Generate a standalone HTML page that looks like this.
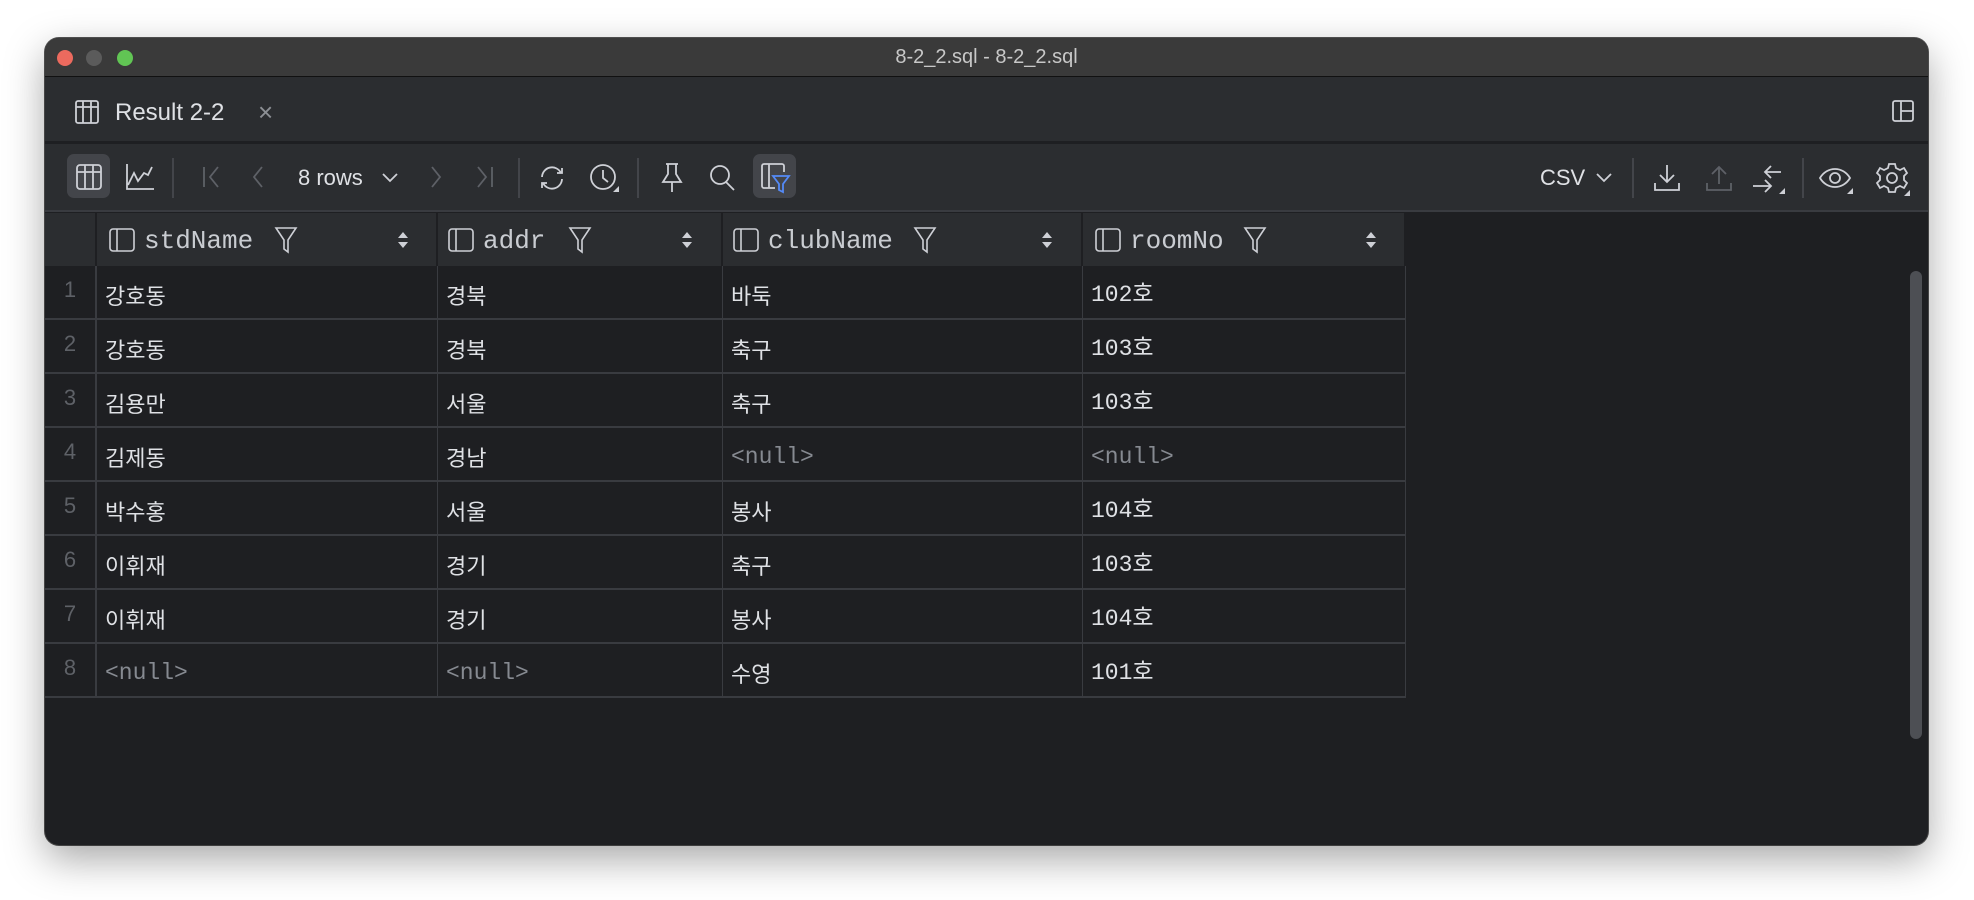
<!DOCTYPE html>
<html><head><meta charset="utf-8"><style>
*{box-sizing:border-box;margin:0;padding:0}
body{width:1974px;height:900px;background:#fff;position:relative;overflow:hidden;font-family:"Liberation Sans","Noto Sans CJK KR",sans-serif}
.win{position:absolute;left:45px;top:38px;width:1883px;height:807px;border-radius:14px;background:#1e1f22;overflow:hidden;box-shadow:0 14px 40px rgba(0,0,0,.35),0 0 0 1px #555}
.title{position:absolute;left:0;top:0;width:100%;height:39px;background:#3a3a3a;border-bottom:1px solid #111;color:#c8c8c8;font-size:20px;text-align:center;line-height:39px}
.dot{position:absolute;top:12px;width:16px;height:16px;border-radius:50%}
.tabbar{position:absolute;left:0;top:39px;width:100%;height:67px;background:#2b2d30;border-bottom:3px solid #1e1f22}
.toolbar{position:absolute;left:0;top:106px;width:100%;height:68px;background:#2b2d30;border-bottom:2px solid #393b40}
.tb{position:absolute;left:0;top:4px;width:100%;height:60px}
.abs{position:absolute}
svg{position:absolute;overflow:visible}
.sep{position:absolute;top:10px;width:2px;height:40px;background:#43454a}
.grid{position:absolute;left:0;top:175px}
.hdr{position:absolute;top:0;height:53px;background:#2b2d30;border-right:2px solid #1e1f22;font-family:"Liberation Mono",monospace;font-size:26px;color:#c9ccd1}
.cell{position:absolute;height:54px;border-right:1px solid #393b40;border-bottom:2px solid #393b40;font-size:23px;color:#dfe1e5;line-height:58px;padding-left:8px;font-family:"Liberation Mono","Noto Sans CJK KR",monospace}
.num{position:absolute;left:0;width:52px;height:54px;border-right:2px solid #393b40;border-bottom:2px solid #393b40;color:#5e6167;font-size:22px;text-align:center;line-height:48px}
.null{color:#868a91}
.kr{font-family:"Noto Sans CJK KR",sans-serif;font-size:22px}
</style></head><body>
<div class="win">
 <div class="title">8-2_2.sql - 8-2_2.sql
  <div class="dot" style="left:12px;background:#ec6a5e"></div>
  <div class="dot" style="left:41px;background:#5b5b5b"></div>
  <div class="dot" style="left:72px;background:#61c554"></div>
 </div>
 <div class="tabbar">
  <svg style="left:30px;top:23px" width="24" height="24" viewBox="0 0 24 24" fill="none" stroke="#ced0d6" stroke-width="1.8"><rect x="1" y="1" width="22" height="22" rx="2"/><path d="M1 7H23M8 1V23M16 1V23"/></svg>
  <div class="abs" style="left:70px;top:22px;font-size:24px;color:#dfe1e5">Result 2-2</div>
  <div class="abs" style="left:213px;top:20px;font-size:26px;color:#8c8f94">×</div>
  <svg style="left:1847px;top:23px" width="22" height="22" viewBox="0 0 22 22" fill="none" stroke="#ced0d6" stroke-width="1.8"><rect x="1" y="1" width="20" height="20" rx="2"/><path d="M9 1V21M9 11H21"/></svg>
 </div>
 <div class="toolbar"><div class="tb">
  <div class="abs" style="left:22px;top:6px;width:43px;height:44px;border-radius:7px;background:#43454a"></div>
  <svg style="left:31px;top:16px" width="26" height="26" viewBox="0 0 26 26" fill="none" stroke="#ced0d6" stroke-width="1.8"><rect x="1" y="1" width="24" height="24" rx="3"/><path d="M1 8H25M9 1V25M17 1V25"/></svg>
  <svg style="left:81px;top:15px" width="28" height="28" viewBox="0 0 28 28" fill="none" stroke="#ced0d6" stroke-width="1.8"><path d="M1 1V26H28M2 22L8 10L12 18L18 10L22 12L26 4"/></svg>
  <div class="sep" style="left:127px"></div>
  <svg style="left:157px;top:18px" width="20" height="22" fill="none" stroke="#5e6167" stroke-width="1.8"><path d="M2 1V21M16 1L8 11L16 21"/></svg>
  <svg style="left:207px;top:18px" width="14" height="22" fill="none" stroke="#5e6167" stroke-width="1.8"><path d="M10 1L2 11L10 21"/></svg>
  <div class="abs" style="left:253px;top:17px;font-size:22px;color:#dfe1e5">8 rows</div>
  <svg style="left:337px;top:25px" width="16" height="10" fill="none" stroke="#ced0d6" stroke-width="1.8"><path d="M1 1L8 8L15 1"/></svg>
  <svg style="left:385px;top:18px" width="14" height="22" fill="none" stroke="#5e6167" stroke-width="1.8"><path d="M2 1L10 11L2 21"/></svg>
  <svg style="left:431px;top:18px" width="20" height="22" fill="none" stroke="#5e6167" stroke-width="1.8"><path d="M2 1L10 11L2 21M16 1V21"/></svg>
  <div class="sep" style="left:473px"></div>
  <svg style="left:492px;top:16px" width="30" height="28" viewBox="0 0 30 28" fill="none" stroke="#ced0d6" stroke-width="1.8"><path d="M5 13A10 10 0 0 1 24 9M25 15A10 10 0 0 1 6 19M20 9H25V4M10 19H5V24"/></svg>
  <svg style="left:544px;top:14px" width="32" height="32" viewBox="0 0 32 32" fill="none" stroke="#ced0d6" stroke-width="1.8"><circle cx="14" cy="15" r="12"/><path d="M14 8V16L19 20"/><path d="M24 30L30 30L30 24Z" fill="#ced0d6" stroke="none"/></svg>
  <div class="sep" style="left:592px"></div>
  <svg style="left:616px;top:15px" width="22" height="30" viewBox="0 0 22 30" fill="none" stroke="#ced0d6" stroke-width="1.8"><path d="M5 1H17M7 1V11L2 19H20L15 11V1M11 19V29"/></svg>
  <svg style="left:664px;top:16px" width="28" height="28" fill="none" stroke="#ced0d6" stroke-width="1.8"><circle cx="11" cy="11" r="9"/><path d="M17 18L25 26"/></svg>
  <div class="abs" style="left:708px;top:6px;width:43px;height:44px;border-radius:7px;background:#43454a"></div>
  <svg style="left:716px;top:15px" width="30" height="30" viewBox="0 0 30 30" fill="none" stroke-width="1.8"><path d="M14 25H3A2 2 0 0 1 1 23V3A2 2 0 0 1 3 1H21A2 2 0 0 1 23 3V9M8 1V25" stroke="#ced0d6"/><path d="M12 13H28L22 21V29L18 27V21Z" stroke="#548af7"/></svg>
  <div class="abs" style="left:1495px;top:17px;font-size:22px;color:#dfe1e5">CSV</div>
  <svg style="left:1551px;top:25px" width="16" height="10" fill="none" stroke="#ced0d6" stroke-width="1.8"><path d="M1 1L8 8L15 1"/></svg>
  <div class="sep" style="left:1587px"></div>
  <svg style="left:1609px;top:16px" width="26" height="28" fill="none" stroke="#ced0d6" stroke-width="1.8"><path d="M13 1V18M6 11L13 18L20 11M1 19V26H25V19"/></svg>
  <svg style="left:1661px;top:16px" width="26" height="28" fill="none" stroke="#5e6167" stroke-width="1.8"><path d="M13 3V20M6 10L13 3L20 10M1 19V26H25V19"/></svg>
  <svg style="left:1708px;top:14px" width="34" height="32" fill="none" stroke="#ced0d6" stroke-width="1.8"><path d="M12 10H28M18 4L12 10L18 16M0 24H18M12 18L18 24L12 30"/><path d="M26 32L32 32L32 26Z" fill="#ced0d6" stroke="none"/></svg>
  <div class="sep" style="left:1757px"></div>
  <svg style="left:1774px;top:18px" width="36" height="28" fill="none" stroke="#ced0d6" stroke-width="1.8"><path d="M1 12C8 0 24 0 31 12C24 24 8 24 1 12Z"/><circle cx="16" cy="12" r="5"/><path d="M28 28L34 28L34 22Z" fill="#ced0d6" stroke="none"/></svg>
  <svg style="left:1831px;top:14px" width="34" height="34" viewBox="0 0 34 34" fill="none" stroke="#ced0d6" stroke-width="1.8"><path d="M13 2H19L20 6L24 8L28 6L31 11L28 14V18L31 21L28 26L24 24L20 26L19 30H13L12 26L8 24L4 26L1 21L4 18V14L1 11L4 6L8 8L12 6Z"/><circle cx="16" cy="16" r="5"/><path d="M28 34L34 34L34 28Z" fill="#ced0d6" stroke="none"/></svg>
 </div></div>
 <div class="grid">
  <div class="hdr" style="left:0;width:52px;border-right:2px solid #1e1f22"></div>
  <div class="hdr" style="left:52px;width:341px"><svg style="left:12px;top:15px" width="24" height="24" fill="none" stroke="#ced0d6" stroke-width="1.6"><rect x="1" y="1" width="24" height="22" rx="3"/><path d="M8 1V23"/></svg><span class="abs" style="left:47px;top:13px">stdName</span><svg style="left:178px;top:14px" width="22" height="26" fill="none" stroke="#ced0d6" stroke-width="1.6"><path d="M1 1H21L13 13V25L9 22V13Z"/></svg><svg style="left:301px;top:19px" width="10" height="16" fill="#ced0d6"><path d="M0 6L5 0L10 6ZM0 10L5 16L10 10Z"/></svg></div>
  <div class="hdr" style="left:393px;width:285px"><svg style="left:10px;top:15px" width="24" height="24" fill="none" stroke="#ced0d6" stroke-width="1.6"><rect x="1" y="1" width="24" height="22" rx="3"/><path d="M8 1V23"/></svg><span class="abs" style="left:45px;top:13px">addr</span><svg style="left:131px;top:14px" width="22" height="26" fill="none" stroke="#ced0d6" stroke-width="1.6"><path d="M1 1H21L13 13V25L9 22V13Z"/></svg><svg style="left:244px;top:19px" width="10" height="16" fill="#ced0d6"><path d="M0 6L5 0L10 6ZM0 10L5 16L10 10Z"/></svg></div>
  <div class="hdr" style="left:678px;width:360px"><svg style="left:10px;top:15px" width="24" height="24" fill="none" stroke="#ced0d6" stroke-width="1.6"><rect x="1" y="1" width="24" height="22" rx="3"/><path d="M8 1V23"/></svg><span class="abs" style="left:45px;top:13px">clubName</span><svg style="left:191px;top:14px" width="22" height="26" fill="none" stroke="#ced0d6" stroke-width="1.6"><path d="M1 1H21L13 13V25L9 22V13Z"/></svg><svg style="left:319px;top:19px" width="10" height="16" fill="#ced0d6"><path d="M0 6L5 0L10 6ZM0 10L5 16L10 10Z"/></svg></div>
  <div class="hdr" style="left:1038px;width:323px"><svg style="left:12px;top:15px" width="24" height="24" fill="none" stroke="#ced0d6" stroke-width="1.6"><rect x="1" y="1" width="24" height="22" rx="3"/><path d="M8 1V23"/></svg><span class="abs" style="left:47px;top:13px">roomNo</span><svg style="left:161px;top:14px" width="22" height="26" fill="none" stroke="#ced0d6" stroke-width="1.6"><path d="M1 1H21L13 13V25L9 22V13Z"/></svg><svg style="left:283px;top:19px" width="10" height="16" fill="#ced0d6"><path d="M0 6L5 0L10 6ZM0 10L5 16L10 10Z"/></svg></div>
 </div>
 <div id="rows" class="grid" style="top:228px"></div>
 <div class="abs" style="left:1865px;top:233px;width:12px;height:468px;border-radius:6px;background:#4d4f54"></div>
</div>
<script>
var d=[["강호동","경북","바둑","102호"],["강호동","경북","축구","103호"],["김용만","서울","축구","103호"],["김제동","경남",null,null],["박수홍","서울","봉사","104호"],["이휘재","경기","축구","103호"],["이휘재","경기","봉사","104호"],[null,null,"수영","101호"]];
var L=[52,393,678,1038],W=[341,285,360,323],h="";
d.forEach(function(r,i){var t=i*54;h+='<div class="num" style="top:'+t+'px">'+(i+1)+'</div>';
r.forEach(function(v,j){h+='<div class="cell'+(j<3&&v?' kr':'')+(v?'':' null')+'" style="top:'+t+'px;left:'+L[j]+'px;width:'+W[j]+'px">'+(v?v:'&lt;null&gt;')+'</div>';});});
document.getElementById('rows').innerHTML=h;
</script>
</body></html>
